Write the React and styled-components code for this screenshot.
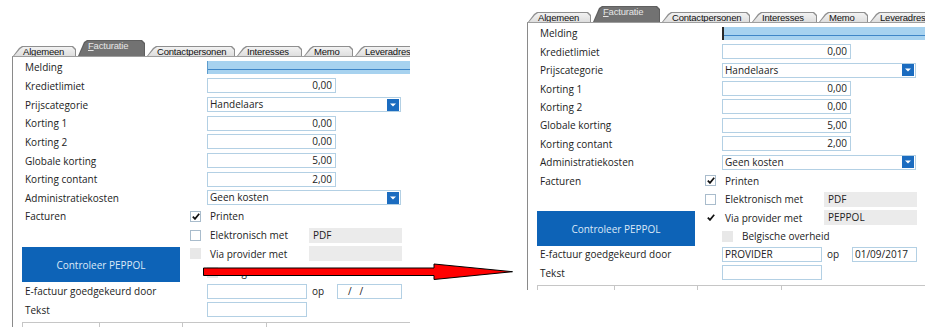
import React from 'react';
import styled, { createGlobalStyle } from 'styled-components';

const GlobalStyle = createGlobalStyle`
  html, body {
    margin: 0;
    padding: 0;
    background: #ffffff;
  }
  body {
    font-family: "Open Sans", "Noto Sans", Arial, sans-serif;
    color: #222;
  }
`;

const TABS = [
  { label: 'Algemeen', width: 63 },
  { label: 'Facturatie', width: 67, active: true },
  { label: 'Contactpersonen', width: 88 },
  { label: 'Interesses', width: 65 },
  { label: 'Memo', width: 49 },
  { label: 'Leveradres', width: 70 },
];

// before / after: same form, second one with PEPPOL filled in
const PANELS = [
  { id: 'before', top: 40, left: 12, row: 18.65, cursor: false, provider: false, providerWith: '', approvedBy: '', approvedOn: '/   /', datePad: 10 },
  { id: 'after', top: 6, left: 117, row: 18.45, cursor: true, provider: true, providerWith: 'PEPPOL', approvedBy: 'PROVIDER', approvedOn: '01/09/2017', datePad: 2 },
];

const NUMBERS = [
  ['Kredietlimiet', '0,00'],
];

const DISCOUNTS = [
  ['Korting 1', '0,00'],
  ['Korting 2', '0,00'],
  ['Globale korting', '5,00'],
  ['Korting contant', '2,00'],
];

function CheckMark() {
  return (
    <svg width="8" height="7" viewBox="0 0 8 7">
      <path d="M0.8 3.6 L3 5.9 L7.2 0.8" fill="none" stroke="#111" strokeWidth="1.7" />
    </svg>
  );
}

function Check({ checked, variant }) {
  return <CheckBox $variant={variant}>{checked && <CheckMark />}</CheckBox>;
}

function Dropdown({ value }) {
  return (
    <SelectBox>
      <span>{value}</span>
      <DropButton>
        <svg width="6" height="4" viewBox="0 0 6 4">
          <path d="M0 0.5 H6 L3 3.5 Z" fill="#ffffff" />
        </svg>
      </DropButton>
    </SelectBox>
  );
}

function InvoicePanel({ data }) {
  return (
    <Panel $top={data.top} $left={data.left}>
      <TabStrip>
        {TABS.map((t) => (
          <TabEdge key={t.label} $active={t.active} $w={t.width}>
            <TabFace $active={t.active}>
              <u>{t.label[0]}</u>{t.label.slice(1)}
            </TabFace>
          </TabEdge>
        ))}
      </TabStrip>
      <Body>
        <Form $row={data.row}>
          <Label>Melding</Label><Cell /><Field><MeldingField $cursor={data.cursor} /></Field>
          {NUMBERS.map(([label, value]) => (
            <React.Fragment key={label}>
              <Label>{label}</Label><Cell /><Field><NumberBox>{value}</NumberBox></Field>
            </React.Fragment>
          ))}
          <Label>Prijscategorie</Label><Cell /><Field><Dropdown value="Handelaars" /></Field>
          {DISCOUNTS.map(([label, value]) => (
            <React.Fragment key={label}>
              <Label>{label}</Label><Cell /><Field><NumberBox>{value}</NumberBox></Field>
            </React.Fragment>
          ))}
          <Label>Administratiekosten</Label><Cell /><Field><Dropdown value="Geen kosten" /></Field>

          <Label>Facturen</Label>
          <Cell><Check checked /></Cell>
          <Field><OptionText>Printen</OptionText></Field>

          <Label />
          <Cell><Check /></Cell>
          <Field>
            <OptionText $w={102}>Elektronisch met</OptionText>
            <ReadBox>PDF</ReadBox>
          </Field>

          <PeppolButton>Controleer PEPPOL</PeppolButton>
          <Cell><Check checked={data.provider} variant={data.provider ? 'bare' : 'disabled'} /></Cell>
          <Field>
            <OptionText $w={102}>Via provider met</OptionText>
            <ReadBox>{data.providerWith}</ReadBox>
          </Field>

          <Cell />
          <Field>
            <Check variant="disabled" />
            <OptionText $gap={9}>Belgische overheid</OptionText>
          </Field>

          <Label>E-factuur goedgekeurd door</Label><Cell />
          <Field>
            <TextBox $w={100}>{data.approvedBy}</TextBox>
            <OpText>op</OpText>
            <TextBox $w={65} $pad={data.datePad}>{data.approvedOn}</TextBox>
          </Field>

          <Label>Tekst</Label><Cell />
          <Field><TextBox $w={100} /></Field>
        </Form>
        <TableHead>
          <HeadCol $w={76} />
          <HeadCol $w={82} />
          <HeadCol $w={83} />
          <HeadCol $w={200} />
        </TableHead>
      </Body>
    </Panel>
  );
}

export default function App() {
  return (
    <>
      <GlobalStyle />
      <Stage>
        {PANELS.map((p) => <InvoicePanel key={p.id} data={p} />)}
        <Arrow width="312" height="18" viewBox="0 0 312 18">
          <polygon
            points="0.5,5 231,5 231,1 309.5,8.7 231,16.5 231,12.5 0.5,12.5"
            fill="#ff0000"
            stroke="#000000"
            strokeWidth="1"
          />
        </Arrow>
      </Stage>
    </>
  );
}

const Stage = styled.div`
  position: relative;
  width: 933px;
  height: 329px;
  display: flex;
  align-items: flex-start;
  overflow: hidden;
`;

const Panel = styled.div`
  width: 398px;
  margin-top: ${(p) => p.$top}px;
  margin-left: ${(p) => p.$left}px;
  flex-shrink: 0;
  overflow: hidden;
`;

const TabStrip = styled.div`
  display: flex;
  align-items: flex-end;
  gap: 2px;
  height: 16px;
  padding-left: 1px;
`;

const tabShape = 'polygon(0 100%, 6px 2px, 9px 0, calc(100% - 3px) 0, 100% 3px, 100% 100%)';

const TabEdge = styled.div`
  flex-shrink: 0;
  width: ${(p) => p.$w}px;
  height: ${(p) => (p.$active ? 16 : 10)}px;
  padding: 1px 1px 0 1px;
  box-sizing: border-box;
  background: ${(p) => (p.$active ? '#5f5f5f' : '#8f8f8f')};
  clip-path: ${tabShape};
`;

const TabFace = styled.div`
  height: 100%;
  padding-left: 9px;
  box-sizing: border-box;
  background: ${(p) => (p.$active ? '#727272' : 'linear-gradient(#f2f2f2, #dedede)')};
  clip-path: ${tabShape};
  color: ${(p) => (p.$active ? '#e6e6e6' : '#111')};
  font-family: "Liberation Sans", Arial, sans-serif;
  font-size: 9.5px;
  letter-spacing: -0.2px;
  line-height: 10px;
  white-space: nowrap;
  overflow: hidden;

  u {
    text-decoration-thickness: 1px;
    text-underline-offset: 1px;
  }
`;

const Body = styled.div`
  border-top: 1px solid #9e9e9e;
  border-left: 1px solid #8a8a8a;
  display: flex;
  flex-direction: column;
`;

const Form = styled.div`
  display: grid;
  grid-template-columns: 177px 17px 1fr;
  grid-auto-rows: ${(p) => p.$row}px;
  padding-top: 1px;
`;

const Label = styled.div`
  display: flex;
  align-items: center;
  padding-left: 12px;
  font-size: 10px;
  color: #222;
  white-space: nowrap;
`;

const Cell = styled.div`
  display: flex;
  align-items: center;
`;

const Field = styled.div`
  display: flex;
  align-items: center;
  min-width: 0;
  font-size: 10px;
`;

const MeldingField = styled.div`
  width: 100%;
  height: 13px;
  box-sizing: border-box;
  background: linear-gradient(#a7d2ef 0 8px, #3f86c7 8px 9px, #a7d2ef 9px);
  border-left: ${(p) => (p.$cursor ? '2px solid #2a2a2a' : '1px solid #5d9ccd')};
`;

const NumberBox = styled.div`
  width: 129px;
  height: 15px;
  box-sizing: border-box;
  border: 1px solid #b3d0e4;
  background: #fff;
  text-align: right;
  padding-right: 3px;
  line-height: 13px;
`;

const SelectBox = styled.div`
  width: 194px;
  height: 15px;
  box-sizing: border-box;
  border: 1px solid #b3d0e4;
  background: #fff;
  display: flex;
  align-items: center;
  justify-content: space-between;
  padding-left: 2px;
  padding-right: 1px;
  line-height: 13px;
`;

const DropButton = styled.div`
  width: 12px;
  height: 12px;
  background: #1b6cc0;
  display: flex;
  align-items: center;
  justify-content: center;
`;

const CheckBox = styled.div`
  width: 11px;
  height: 11px;
  box-sizing: border-box;
  display: flex;
  align-items: center;
  justify-content: center;
  background: ${(p) => (p.$variant === 'disabled' ? '#e8e8e8' : '#fff')};
  border: 1px solid ${(p) => (p.$variant ? 'transparent' : '#a9bccc')};
`;

const OptionText = styled.span`
  width: ${(p) => (p.$w ? `${p.$w}px` : 'auto')};
  padding-left: ${(p) => (p.$gap ? p.$gap : 3)}px;
  box-sizing: border-box;
  flex-shrink: 0;
  white-space: nowrap;
`;

const ReadBox = styled.div`
  width: 93px;
  height: 15px;
  box-sizing: border-box;
  background: #ebebeb;
  padding-left: 4px;
  line-height: 15px;
`;

const TextBox = styled.div`
  width: ${(p) => p.$w}px;
  height: 15px;
  box-sizing: border-box;
  border: 1px solid #b3d0e4;
  background: #fff;
  padding-left: ${(p) => (p.$pad !== undefined ? p.$pad : 2)}px;
  line-height: 13px;
  white-space: pre;
  flex-shrink: 0;
`;

const OpText = styled.span`
  width: 30px;
  padding-left: 5px;
  box-sizing: border-box;
`;

const PeppolButton = styled.div`
  grid-row: span 2;
  align-self: start;
  margin: 3px 0 0 9px;
  width: 158px;
  height: 35px;
  background: #0d63b7;
  color: #dce9f7;
  font-size: 10px;
  display: flex;
  align-items: center;
  justify-content: center;
`;

const TableHead = styled.div`
  display: flex;
  margin: 3px 0 0 9px;
  height: 4px;
  border-top: 1px solid #c6c6c6;
`;

const HeadCol = styled.div`
  width: ${(p) => p.$w}px;
  flex-shrink: 0;
  border-left: 1px solid #c6c6c6;
`;

const Arrow = styled.svg`
  position: absolute;
  left: 203px;
  top: 263px;
`;
